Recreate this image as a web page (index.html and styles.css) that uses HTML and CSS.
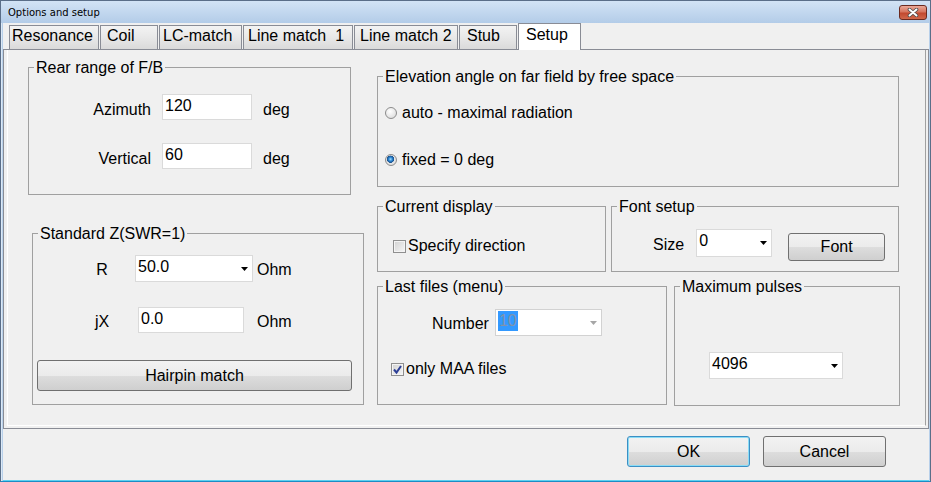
FILE: index.html
```html
<!DOCTYPE html>
<html lang="en">
<head>
    <meta charset="UTF-8">
    <title>Options and setup</title>
    <link rel="stylesheet" href="styles.css">
</head>
<body>

<div class="window">
    <div class="titlebar">
        <span class="title">Options and setup</span>
        <button class="close">
            <svg width="12" height="9" viewBox="0 0 12 9">
                <path d="M2.5 1.5 L9.5 7.5 M9.5 1.5 L2.5 7.5" stroke="#4a4a4a" stroke-width="3.6" stroke-linecap="round"/>
                <path d="M2.5 1.5 L9.5 7.5 M9.5 1.5 L2.5 7.5" stroke="#fff" stroke-width="2" stroke-linecap="round"/>
            </svg>
        </button>
    </div>

    <div class="body">
        <!-- Tabs -->
        <div class="tabs">
            <div class="tab tab-res">Resonance</div>
            <div class="tab tab-coil">Coil</div>
            <div class="tab tab-lc">LC-match</div>
            <div class="tab tab-lm1">Line match &nbsp;1</div>
            <div class="tab tab-lm2">Line match 2</div>
            <div class="tab tab-stub">Stub</div>
            <div class="tab tab-setup active">Setup</div>
        </div>

        <div class="panel">
            <div class="page">

                <div class="col-left">
                    <!-- Rear range -->
                    <div class="group rear">
                        <span class="group-title">Rear range of F/B</span>
                        <div class="field-row">
                            <span class="rear-label">Azimuth</span>
                            <div class="edit rear-edit">120</div>
                            <span class="rear-unit">deg</span>
                        </div>
                        <div class="field-row rear-second">
                            <span class="rear-label">Vertical</span>
                            <div class="edit rear-edit">60</div>
                            <span class="rear-unit">deg</span>
                        </div>
                    </div>

                    <!-- Standard Z -->
                    <div class="group standard">
                        <span class="group-title">Standard Z(SWR=1)</span>
                        <div class="field-row">
                            <span class="z-label">R</span>
                            <div class="combo r-combo">
                                <span>50.0</span>
                                <svg class="arrow" width="7" height="4" viewBox="0 0 7 4"><polygon points="0,0 7,0 3.5,4" fill="#000"/></svg>
                            </div>
                            <span class="z-unit r-unit">Ohm</span>
                        </div>
                        <div class="field-row z-second">
                            <span class="z-label">jX</span>
                            <div class="edit jx-edit">0.0</div>
                            <span class="z-unit jx-unit">Ohm</span>
                        </div>
                        <button class="btn hairpin">Hairpin match</button>
                    </div>
                </div>

                <div class="col-right">
                    <!-- Elevation -->
                    <div class="group elevation">
                        <span class="group-title">Elevation angle on far field by free space</span>
                        <div class="option">
                            <span class="radio"></span>
                            <span>auto - maximal radiation</span>
                        </div>
                        <div class="option option-second">
                            <span class="radio on"></span>
                            <span>fixed = 0 deg</span>
                        </div>
                    </div>

                    <div class="row-mid">
                        <div class="group current">
                            <span class="group-title">Current display</span>
                            <div class="option">
                                <span class="check"></span>
                                <span>Specify direction</span>
                            </div>
                        </div>

                        <div class="group font-setup">
                            <span class="group-title">Font setup</span>
                            <div class="field-row">
                                <span class="size-label">Size</span>
                                <div class="combo size-combo">
                                    <span>0</span>
                                    <svg class="arrow" width="7" height="4" viewBox="0 0 7 4"><polygon points="0,0 7,0 3.5,4" fill="#000"/></svg>
                                </div>
                                <button class="btn font-btn">Font</button>
                            </div>
                        </div>
                    </div>

                    <div class="row-bottom">
                        <div class="group last-files">
                            <span class="group-title">Last files (menu)</span>
                            <div class="field-row number-row">
                                <span class="number-label">Number</span>
                                <div class="combo disabled number-combo">
                                    <span class="selected">10</span>
                                    <svg class="arrow" width="7" height="4" viewBox="0 0 7 4"><polygon points="0,0 7,0 3.5,4" fill="#a6a6a6"/></svg>
                                </div>
                            </div>
                            <div class="option maa-row">
                                <span class="check">
                                    <svg width="11" height="11" viewBox="0 0 11 11"><path d="M2 5.5 L4.5 8.5 L9 2" fill="none" stroke="#2c3f96" stroke-width="2"/></svg>
                                </span>
                                <span>only MAA files</span>
                            </div>
                        </div>

                        <div class="group pulses">
                            <span class="group-title">Maximum pulses</span>
                            <div class="combo pulses-combo">
                                <span>4096</span>
                                <svg class="arrow" width="7" height="4" viewBox="0 0 7 4"><polygon points="0,0 7,0 3.5,4" fill="#000"/></svg>
                            </div>
                        </div>
                    </div>
                </div>

            </div>
        </div>

        <!-- Dialog buttons -->
        <div class="footer">
            <button class="btn dialog-btn default">OK</button>
            <button class="btn dialog-btn">Cancel</button>
        </div>
    </div>
</div>

</body>
</html>
```

FILE: styles.css
```css
/* Basis */
body {
    margin: 0;
    background-color: #f0f0f0;
    font-family: "Liberation Sans", Arial, sans-serif;
    font-size: 16px;
    color: #000;
}

.window {
    width: 931px;
    height: 482px;
    box-sizing: border-box;
    border: 1px solid #5a6e88;
    border-bottom-color: #1d8cc4;
    background-color: #f0f0f0;
    display: flex;
    flex-direction: column;
    box-shadow: inset 1px 0 #dce9f6, inset 2px 0 #b8d0ea, inset -1px 0 #b8d0ea, inset 0 -1px #5cd2f2;
}

/* Title bar */
.titlebar {
    height: 22px;
    flex-shrink: 0;
    display: flex;
    align-items: center;
    justify-content: space-between;
    padding: 0 3px 0 7px;
    background: linear-gradient(#d2e3f5, #b3cce8);
}

.title {
    font-family: "DejaVu Sans", sans-serif;
    font-size: 10px;
    color: #000;
}

.close {
    width: 28px;
    height: 15px;
    box-sizing: border-box;
    padding: 0;
    border: 1px solid #6b2a1f;
    border-radius: 3px;
    background: linear-gradient(#eaa898, #d6755e 45%, #c2492f 55%, #d0674a);
    display: flex;
    align-items: center;
    justify-content: center;
}

.body {
    flex: 1;
    display: flex;
    flex-direction: column;
    padding: 0 1px 0 2px;
}

/* Tabs */
.tabs {
    height: 26px;
    flex-shrink: 0;
    display: flex;
    align-items: flex-end;
    gap: 1px;
    padding-left: 6px;
}

.tab {
    height: 24px;
    box-sizing: border-box;
    border: 1px solid #898c95;
    border-bottom: none;
    background: linear-gradient(#f3f3f3, #e8e8e8 50%, #dadada);
    line-height: 19px;
    white-space: nowrap;
}

.tab.active {
    height: 27px;
    margin-bottom: -1px;
    padding-top: 1px;
    background: #fff;
    position: relative;
    z-index: 1;
}

.tab-res { width: 90px; padding-left: 2px; }
.tab-coil { width: 58px; padding-left: 6px; }
.tab-lc { width: 83px; padding-left: 3px; }
.tab-lm1 { width: 110px; padding-left: 4px; }
.tab-lm2 { width: 104px; padding-left: 5px; }
.tab-stub { width: 58px; padding-left: 7px; }
.tab-setup { width: 63px; padding-left: 7px; }

/* Tab page */
.panel {
    height: 380px;
    flex-shrink: 0;
    box-sizing: border-box;
    border: 1px solid #898c95;
    padding: 0 2px 2px 3px;
}

.page {
    height: 100%;
    box-sizing: border-box;
    border-left: 1px solid #fff;
    border-bottom: 1px solid #fff;
    border-right: 1px solid #a0a0a0;
    padding: 17px 0 0 20px;
    display: flex;
}

.col-left {
    width: 336px;
    display: flex;
    flex-direction: column;
    align-items: flex-start;
}

.col-right {
    margin: 9px 0 0 13px;
}

/* Group boxes */
.group {
    position: relative;
    box-sizing: border-box;
    border: 1px solid #a0a0a0;
}

.group-title {
    position: absolute;
    top: -9px;
    left: 5px;
    padding: 0 2px;
    line-height: 18px;
    background-color: #f0f0f0;
    white-space: nowrap;
}

.field-row {
    display: flex;
    align-items: flex-start;
}

/* Edit fields and combo boxes */
.edit, .combo {
    box-sizing: border-box;
    height: 26px;
    border: 1px solid #dadada;
    background-color: #fff;
    padding-left: 2px;
    line-height: 21px;
    display: flex;
    align-items: flex-start;
}

.combo .arrow {
    margin-left: auto;
    margin-right: 4px;
    align-self: center;
}

.combo.disabled {
    border-color: #d2d2d2;
}

.selected {
    margin-top: 1px;
    padding: 0 1px;
    line-height: 20px;
    background-color: #3399ff;
    color: #7f93ad;
}

/* Rear range */
.rear {
    width: 323px;
    height: 128px;
    padding-top: 26px;
}

.rear-second {
    margin-top: 23px;
}

.rear-label {
    width: 122px;
    text-align: right;
    padding-top: 7px;
    line-height: 18px;
}

.rear-edit {
    width: 90px;
    margin-left: 11px;
}

.rear-unit {
    margin-left: 11px;
    padding-top: 7px;
    line-height: 18px;
}

/* Standard Z */
.standard {
    width: 332px;
    height: 172px;
    margin: 38px 0 0 4px;
    padding-top: 21px;
}

.z-second {
    margin-top: 25px;
}

.z-label {
    width: 28px;
    margin-left: 55px;
    text-align: center;
    padding-top: 6px;
    line-height: 18px;
}

.z-unit {
    padding-top: 6px;
    line-height: 18px;
}

.r-combo {
    width: 118px;
    height: 27px;
    margin-left: 19px;
}

.r-unit { margin-left: 4px; }

.jx-edit {
    width: 106px;
    margin-left: 22px;
}

.jx-unit { margin-left: 13px; }

/* Buttons */
.btn {
    box-sizing: border-box;
    padding: 0;
    border: 1px solid #707070;
    border-radius: 3px;
    background: linear-gradient(#f2f2f2 0%, #ebebeb 50%, #dddddd 51%, #cfcfcf 100%);
    font-family: inherit;
    font-size: 16px;
    color: #000;
    text-align: center;
}

.hairpin {
    display: block;
    width: 315px;
    height: 31px;
    margin: 27px 0 0 4px;
}

/* Elevation */
.elevation {
    width: 522px;
    height: 111px;
    padding: 26px 0 0 7px;
}

.option {
    height: 20px;
    display: flex;
    align-items: center;
    gap: 5px;
}

.option-second {
    margin-top: 27px;
}

.radio {
    width: 12px;
    height: 12px;
    box-sizing: border-box;
    border: 1px solid #8c8c8c;
    border-radius: 50%;
    background: radial-gradient(circle at 40% 35%, #ffffff, #d6d6d6);
}

.radio.on {
    background: radial-gradient(circle at 45% 42%, #a8e0ff 0, #2f8ad6 1.8px, #174f8c 3.4px, #e8e8e8 3.9px, #cfcfcf 100%);
}

.check {
    width: 13px;
    height: 13px;
    box-sizing: border-box;
    border: 1px solid #8f8f8f;
    background: linear-gradient(135deg, #d2d2d2, #f6f6f6);
    box-shadow: inset 0 0 0 1px #f4f4f4;
    display: flex;
    align-items: center;
    justify-content: center;
}

.current .option,
.maa-row {
    gap: 2px;
}

/* Middle row */
.row-mid {
    display: flex;
    gap: 5px;
    margin-top: 19px;
}

.current {
    width: 229px;
    height: 66px;
    padding: 29px 0 0 15px;
}

.font-setup {
    width: 288px;
    height: 66px;
    padding: 22px 0 0 41px;
}

.size-label {
    padding-top: 7px;
    line-height: 18px;
}

.size-combo {
    width: 76px;
    height: 28px;
    margin-left: 12px;
}

.font-btn {
    width: 97px;
    height: 28px;
    margin: 4px 0 0 16px;
}

/* Bottom row */
.row-bottom {
    display: flex;
    gap: 7px;
    margin-top: 14px;
}

.last-files {
    width: 290px;
    height: 119px;
    padding: 22px 0 0 13px;
}

.number-row {
    margin-left: 41px;
}

.number-label {
    padding-top: 6px;
    line-height: 18px;
}

.number-combo {
    width: 107px;
    height: 27px;
    margin-left: 6px;
}

.maa-row {
    margin-top: 23px;
}

.pulses {
    width: 226px;
    height: 120px;
    padding: 65px 0 0 34px;
}

.pulses-combo {
    width: 134px;
    height: 27px;
}

/* Dialog buttons */
.footer {
    display: flex;
    justify-content: flex-end;
    gap: 13px;
    padding: 7px 43px 0 0;
}

.dialog-btn {
    width: 123px;
    height: 31px;
}

.dialog-btn.default {
    border-color: #3c8fc4;
    box-shadow: inset 0 0 0 1px #8adcf6;
}
```
